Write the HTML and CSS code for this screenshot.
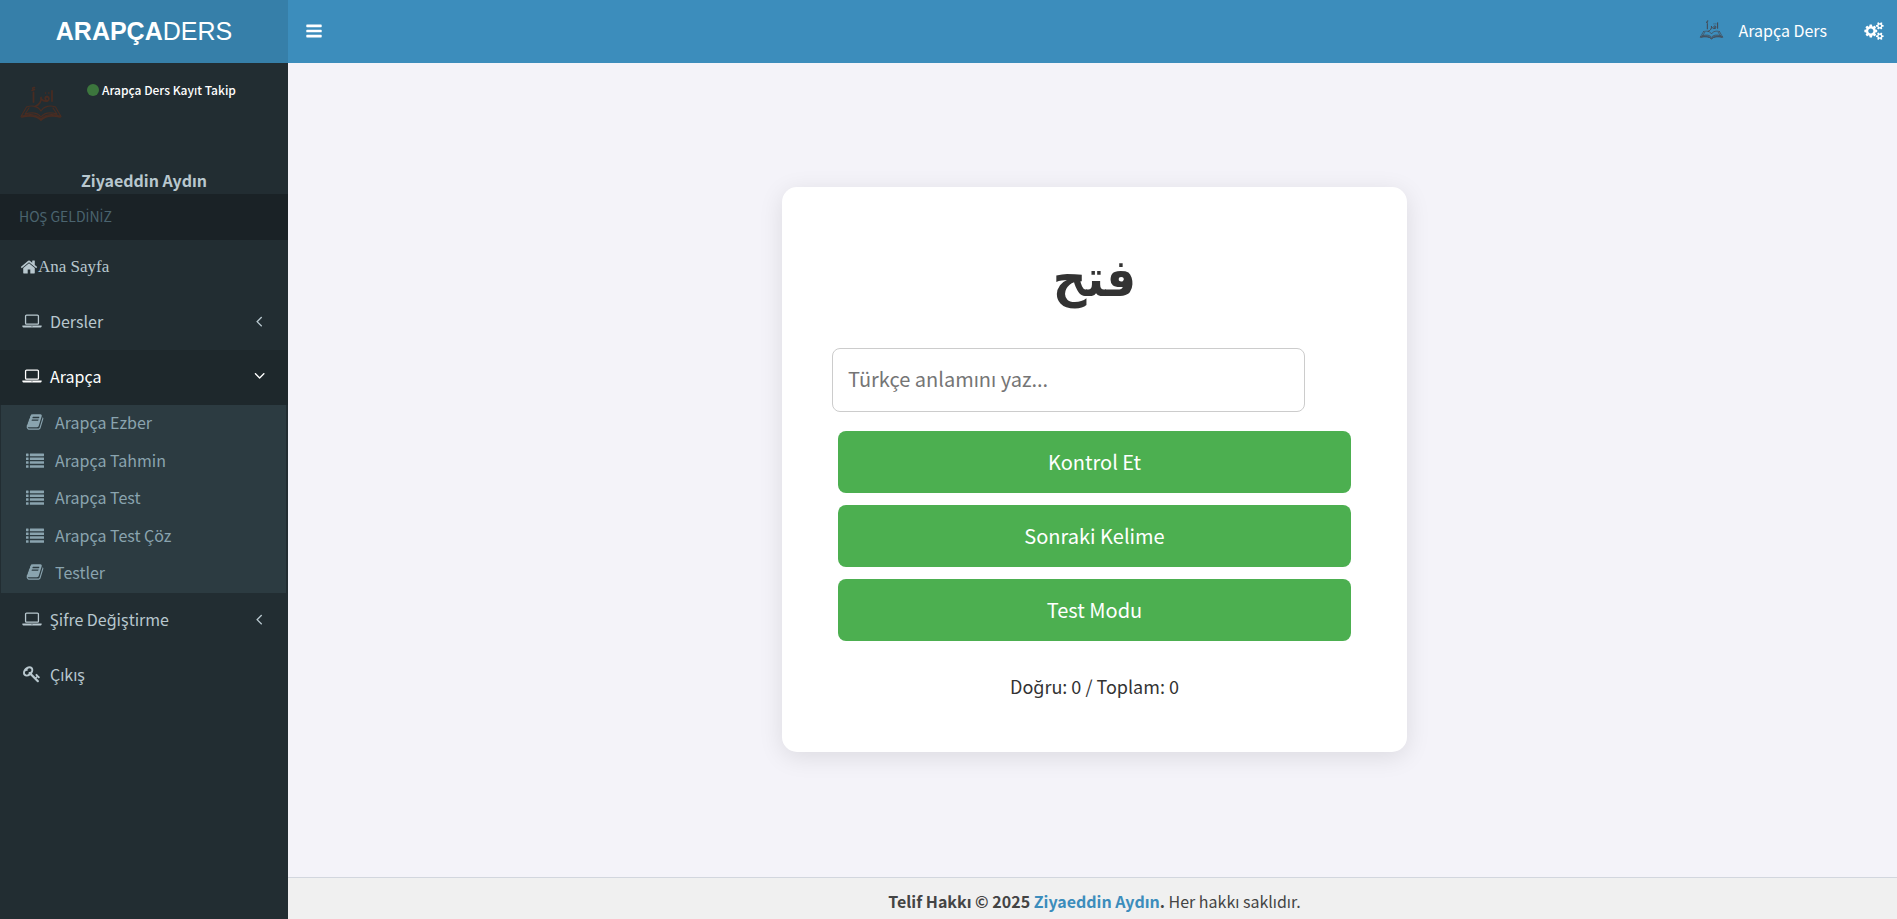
FILE: index.html
```html
<!DOCTYPE html>
<html lang="tr">
<head>
<meta charset="utf-8">
<title>Arapça Ders</title>
<link rel="stylesheet" href="styles.css">
</head>
<body>
<svg class="sprite" aria-hidden="true">
  <symbol id="i-bars" viewBox="0 0 1792 1792"><path d="M128 320q0-64 64-64h1408q64 0 64 64v128q0 64-64 64h-1408q-64 0-64-64zM128 832q0-64 64-64h1408q64 0 64 64v128q0 64-64 64h-1408q-64 0-64-64zM128 1344q0-64 64-64h1408q64 0 64 64v128q0 64-64 64h-1408q-64 0-64-64z"/></symbol>
  <symbol id="i-home" viewBox="0 0 1792 1792"><path d="M1472 992v480q0 26-19 45t-45 19h-384v-384h-256v384h-384q-26 0-45-19t-19-45v-480q0-1 .5-3t.5-3l575-474 575 474q1 2 1 6zm223-69l-62 74q-8 9-21 11h-3q-13 0-21-7l-692-577-692 577q-12 8-24 7-13-2-21-11l-62-74q-8-10-7-23.500t11-21.500l719-599q32-26 76-26t76 26l244 204v-195q0-14 9-23t23-9h192q14 0 23 9t9 23v408l219 182q10 8 11 21.500t-7 23.500z"/></symbol>
  <symbol id="i-laptop" viewBox="0 0 1920 1792"><path d="M416 1280q-66 0-113-47t-47-113v-704q0-66 47-113t113-47h1088q66 0 113 47t47 113v704q0 66-47 113t-113 47h-1088zm-32-864v704q0 13 9.500 22.500t22.500 9.500h1088q13 0 22.500-9.500t9.500-22.500v-704q0-13-9.500-22.500t-22.500-9.500h-1088q-13 0-22.500 9.500t-9.500 22.500zm1376 928h160v96q0 40-47 68t-113 28h-1600q-66 0-113-28t-47-68v-96h1760zm-720 96q16 0 16-16t-16-16h-160q-16 0-16 16t16 16h160z"/></symbol>
  <symbol id="i-book" viewBox="0 0 1792 1792"><path d="M1703 478q40 57 18 129l-275 906q-19 64-76.500 107.500t-122.500 43.500h-923q-77 0-148.500-53.500t-99.500-131.500q-24-67-2-127 0-4 3-27t4-37q1-8-3-21.500t-3-19.500q2-11 8-21t16.500-23.500 16.500-23.500q23-38 45-91.500t30-91.500q3-10 .5-30t-.5-28q3-11 17-28t17-23q21-36 42-92t25-90q1-9-2.500-32t.5-28q4-13 22-30.500t22-22.500q19-26 42.500-84.500t27.500-96.500q1-8-3-25.500t-2-26.500q2-8 9-18t18-23 17-21q8-12 16.500-30.500t15-35 16-36 19.500-32 26.500-23.500 36-11.500 47.500 5.500l-1 3q38-9 51-9h761q74 0 114 56t18 130l-274 906q-36 119-71.500 153.500t-128.500 34.500h-869q-27 0-38 15-11 16-1 43 24 70 144 70h923q29 0 56-15.500t35-41.500l300-987q7-22 5-57 38 15 59 43zm-1064 2q-4 13 2 22.500t20 9.500h608q13 0 25.500-9.500t16.500-22.500l21-64q4-13-2-22.500t-20-9.500h-608q-13 0-25.500 9.500t-16.500 22.500zm-83 256q-4 13 2 22.500t20 9.500h608q13 0 25.500-9.500t16.500-22.500l21-64q4-13-2-22.500t-20-9.500h-608q-13 0-25.500 9.500t-16.500 22.500z"/></symbol>
  <symbol id="i-list" viewBox="0 0 1792 1792"><path d="M0 288q0-32 32-32h192q32 0 32 32v192q0 32-32 32h-192q-32 0-32-32zM0 672q0-32 32-32h192q32 0 32 32v192q0 32-32 32h-192q-32 0-32-32zM0 1056q0-32 32-32h192q32 0 32 32v192q0 32-32 32h-192q-32 0-32-32zM0 1440q0-32 32-32h192q32 0 32 32v192q0 32-32 32h-192q-32 0-32-32zM384 288q0-32 32-32h1344q32 0 32 32v192q0 32-32 32h-1344q-32 0-32-32zM384 672q0-32 32-32h1344q32 0 32 32v192q0 32-32 32h-1344q-32 0-32-32zM384 1056q0-32 32-32h1344q32 0 32 32v192q0 32-32 32h-1344q-32 0-32-32zM384 1440q0-32 32-32h1344q32 0 32 32v192q0 32-32 32h-1344q-32 0-32-32z"/></symbol>
  <symbol id="i-angle" viewBox="0 0 1792 1792"><path d="M1203 544q0 13-10 23l-393 393 393 393q10 10 10 23t-10 23l-50 50q-10 10-23 10t-23-10l-466-466q-10-10-10-23t10-23l466-466q10-10 23-10t23 10l50 50q10 10 10 23z"/></symbol>
  <symbol id="i-key" viewBox="0 0 1792 1792"><path d="M832 512q0-80-56-136t-136-56-136 56-56 136q0 42 19 83-41-19-83-19-80 0-136 56t-56 136 56 136 136 56 136-56 56-136q0-42-19-83 41 19 83 19 80 0 136-56t56-136zm851 704q0 17-49 66t-66 49q-9 0-28.500-16t-36.500-33-38.500-40-24.500-26l-96 96 220 220q28 28 28 68 0 42-39 81t-81 39q-40 0-68-28l-671-671q-176 131-365 131-163 0-265.500-102.500t-102.500-265.500q0-160 95-313t248-248 313-95q163 0 265.500 102.500t102.500 265.500q0 189-131 365l355 355 96-96q-3-3-26-24.500t-40-38.500-33-36.500-16-28.500q0-17 49-66t66-49q13 0 23 10 6 6 46 44.500t82 79.500 86.500 86 73 78 28.500 41z"/></symbol>
  <symbol id="i-cogs" viewBox="0 0 1920 1792"><path d="M896 896q0-106-75-181t-181-75-181 75-75 181 75 181 181 75 181-75 75-181zm768 512q0-52-38-90t-90-38-90 38-38 90q0 53 37.500 90.500t90.500 37.500 90.500-37.500 37.500-90.500zm0-1024q0-52-38-90t-90-38-90 38-38 90q0 53 37.500 90.500t90.500 37.500 90.500-37.500 37.500-90.500zm-384 421v185q0 10-7 19.500t-16 10.500l-155 24q-11 35-32 76 34 48 90 115 7 11 7 20 0 12-7 19-23 30-82.500 89.500t-78.500 59.500q-11 0-21-7l-115-90q-37 19-77 31-11 108-23 155-7 24-30 24h-186q-11 0-20-7.500t-10-17.500l-23-153q-34-10-75-31l-118 89q-7 7-20 7-11 0-21-8-144-133-144-160 0-9 7-19 10-14 41-53t47-61q-23-44-35-82l-152-24q-10-1-17-9.500t-7-19.500v-185q0-10 7-19.500t16-10.500l155-24q11-35 32-76-34-48-90-115-7-11-7-20 0-12 7-20 22-30 82-89t79-59q11 0 21 7l115 90q34-18 77-32 11-108 23-154 7-24 30-24h186q11 0 20 7.500t10 17.500l23 153q34 10 75 31l118-89q8-7 20-7 11 0 21 8 144 133 144 160 0 8-7 19-12 16-42 54t-45 60q23 48 34 82l152 23q10 2 17 10.500t7 19.500zm640 533v140q0 16-149 31-12 27-30 52 51 113 51 138 0 4-4 7-122 71-124 71-8 0-46-47t-52-68q-20 2-30 2t-30-2q-14 21-52 68t-46 47q-2 0-124-71-4-3-4-7 0-25 51-138-18-25-30-52-149-15-149-31v-140q0-16 149-31 13-29 30-52-51-113-51-138 0-4 4-7 4-2 35-20t59-34 30-16q8 0 46 46.500t52 67.500q20-2 30-2t30 2q51-71 92-112l6-2q4 0 124 70 4 3 4 7 0 25-51 138 17 23 30 52 149 15 149 31zm0-1024v140q0 16-149 31-12 27-30 52 51 113 51 138 0 4-4 7-122 71-124 71-8 0-46-47t-52-68q-20 2-30 2t-30-2q-14 21-52 68t-46 47q-2 0-124-71-4-3-4-7 0-25 51-138-18-25-30-52-149-15-149-31v-140q0-16 149-31 13-29 30-52-51-113-51-138 0-4 4-7 4-2 35-20t59-34 30-16q8 0 46 46.500t52 67.500q20-2 30-2t30 2q51-71 92-112l6-2q4 0 124 70 4 3 4 7 0 25-51 138 17 23 30 52 149 15 149 31z"/></symbol>
  <symbol id="i-logo" viewBox="0 0 44 36">
    <g fill="none" stroke="currentColor" stroke-linecap="round" stroke-linejoin="round">
      <path stroke-width="1.200" d="M7.500 21C13 19 19 20 22 25 25 20 31 19 36.500 21M7.500 21L2 30.500M36.500 21L42 30.500M2 30.500C10 27.500 18 28 22 33 26 28 34 27.500 42 30.500M10 22L6 28M34 22L38 28M6 28C13 26 19 27 22 31 25 27 31 26 38 28"/>
      <path stroke-width="1.800" d="M3 31C11 29 18 30 22 34 26 30 33 29 41 31"/>
      <path stroke-width="1.800" d="M33 5V15M28.500 15C25.500 14 25.500 11 28 10.500 30.500 11 30.500 14 28.500 15C26 15.500 24 15 23 13.500M22 11.500C23 15 20 19 16 20.500M14.500 6.500V16"/>
      <path stroke-width="1.600" d="M26.500 7H26.600M29.800 7H29.900M15.500 1.500C13 1 13 4 15.500 3.500L13 4.500"/>
    </g>
  </symbol>
</svg>

<header class="topbar">
  <a class="brand" href="#"><b>ARAPÇA</b>DERS</a>
  <nav class="topnav">
    <button class="toggle" type="button" aria-label="Menü"><svg class="icon"><use href="#i-bars"/></svg></button>
    <div class="topnav-right">
      <a class="account" href="#"><svg class="account-logo"><use href="#i-logo"/></svg>Arapça Ders</a>
      <a class="settings" href="#" aria-label="Ayarlar"><svg class="icon icon-wide"><use href="#i-cogs"/></svg></a>
    </div>
  </nav>
</header>

<div class="shell">
  <aside class="sidebar">
    <div class="user-panel">
      <div class="user-row">
        <svg class="user-logo"><use href="#i-logo"/></svg>
        <a class="status" href="#"><span class="dot"></span>Arapça Ders Kayıt Takip</a>
      </div>
      <strong class="user-name">Ziyaeddin Aydın</strong>
    </div>
    <div class="menu-title">HOŞ GELD<span class="dotted">İ</span>N<span class="dotted">İ</span>Z</div>
    <ul class="menu">
      <li><a class="item item-home" href="#"><svg class="icon"><use href="#i-home"/></svg>Ana Sayfa</a></li>
      <li><a class="item" href="#"><svg class="icon icon-wide"><use href="#i-laptop"/></svg><span class="label">Dersler</span><svg class="icon caret"><use href="#i-angle"/></svg></a></li>
      <li>
        <a class="item active" href="#"><svg class="icon icon-wide"><use href="#i-laptop"/></svg><span class="label">Arapça</span><svg class="icon caret caret-open"><use href="#i-angle"/></svg></a>
        <ul class="submenu">
          <li><a class="subitem" href="#"><svg class="icon"><use href="#i-book"/></svg>Arapça Ezber</a></li>
          <li><a class="subitem" href="#"><svg class="icon"><use href="#i-list"/></svg>Arapça Tahmin</a></li>
          <li><a class="subitem" href="#"><svg class="icon"><use href="#i-list"/></svg>Arapça Test</a></li>
          <li><a class="subitem" href="#"><svg class="icon"><use href="#i-list"/></svg>Arapça Test Çöz</a></li>
          <li><a class="subitem" href="#"><svg class="icon"><use href="#i-book"/></svg>Testler</a></li>
        </ul>
      </li>
      <li><a class="item" href="#"><svg class="icon icon-wide"><use href="#i-laptop"/></svg><span class="label">Şifre Değiştirme</span><svg class="icon caret"><use href="#i-angle"/></svg></a></li>
      <li><a class="item" href="#"><svg class="icon icon-wide"><use href="#i-key"/></svg><span class="label">Çıkış</span></a></li>
    </ul>
  </aside>

  <div class="page">
    <main class="content">
      <section class="card">
        <div class="word" lang="ar" dir="rtl">فتح</div>
        <input class="answer" type="text" placeholder="Türkçe anlamını yaz..." aria-label="Türkçe anlamını yaz">
        <div class="actions">
          <button class="btn" type="button">Kontrol Et</button>
          <button class="btn" type="button">Sonraki Kelime</button>
          <button class="btn" type="button">Test Modu</button>
        </div>
        <p class="score">Doğru: 0 / Toplam: 0</p>
      </section>
    </main>
    <footer class="footer"><strong>Telif Hakkı © 2025 <a href="#">Ziyaeddin Aydın</a>.</strong> Her hakkı saklıdır.</footer>
  </div>
</div>
</body>
</html>
```
FILE: styles.css
```css
* { box-sizing: border-box; }

body {
  margin: 0;
  min-height: 100vh;
  display: flex;
  flex-direction: column;
  background: #f4f3f9;
  color: #333;
  font-family: "Noto Sans CJK SC", "Noto Sans", sans-serif;
  font-size: 16px;
  line-height: 24px;
}

a { color: inherit; text-decoration: none; }
ul { list-style: none; margin: 0; padding: 0; }
button, input { font: inherit; }

.sprite { position: absolute; width: 0; height: 0; }

.icon {
  width: 18px;
  height: 18px;
  flex: none;
  fill: currentColor;
}
.icon-wide { width: 20px; }

/* Top bar */
.topbar { display: flex; height: 63px; color: #fff; }
.brand {
  flex: none;
  width: 288px;
  background: #367fa9;
  font-family: "Liberation Sans", Arial, sans-serif;
  font-size: 25px;
  line-height: 62px;
  text-align: center;
}
.topnav {
  flex: 1;
  display: flex;
  justify-content: space-between;
  background: #3c8dbc;
}
.toggle {
  display: flex;
  align-items: center;
  padding: 0 17px 2px;
  border: 0;
  background: none;
  color: inherit;
}
.topnav-right { display: flex; }
.account { display: flex; align-items: center; padding: 0 18px 3px; }
.account-logo { width: 25px; height: 20px; margin-right: 14px; color: #45454d; }
.settings { display: flex; align-items: center; padding: 0 13px 2px 19px; }

/* Sidebar */
.shell { flex: 1; display: flex; }
.sidebar { flex: none; width: 288px; background: #222d32; color: #b8c7ce; }
.user-panel {
  display: flex;
  flex-direction: column;
  justify-content: space-between;
  height: 131px;
  padding-bottom: 2px;
}
.user-row { display: flex; align-items: flex-start; padding: 15px 19px; }
.user-logo { width: 44px; height: 36px; margin-top: 8px; color: #482c22; }
.status {
  display: flex;
  align-items: center;
  margin-left: 24px;
  color: #fff;
  font-size: 12px;
  font-weight: 500;
}
.dot {
  width: 12px;
  height: 12px;
  margin-right: 3px;
  border-radius: 50%;
  background: #3c763d;
}
.user-name { text-align: center; }
.menu-title {
  height: 46px;
  padding: 10px 19px;
  background: #1a2226;
  color: #4b646f;
  font-size: 14px;
}
.dotted { font-family: "Open Sans", sans-serif; }
.item {
  display: flex;
  align-items: center;
  height: 55px;
  padding: 0 20px 4px 22px;
}
.item .label { flex: 1; margin-left: 8px; }
.item-home {
  padding: 0 20px 2px;
  font-family: "Liberation Serif", serif;
  font-size: 17px;
}
.item.active { background: #1e282c; color: #fff; }
.caret-open { transform: rotate(-90deg); }
.submenu { margin: 0 2px 0 1px; background: #2c3b41; color: #8aa4af; }
.subitem {
  display: flex;
  align-items: center;
  gap: 11px;
  padding: 5px 25px 9px;
}
.submenu li:nth-child(even) { margin-bottom: -1px; }

/* Content */
.page { flex: 1; display: flex; flex-direction: column; }
.content {
  flex: 1;
  display: flex;
  align-items: center;
  justify-content: center;
  padding: 0 0 2px 4px;
}
.card {
  width: 100%;
  max-width: 625px;
  padding: 50px 50px 52px;
  border-radius: 15px;
  background: #fff;
  box-shadow: 0 5px 25px rgba(0, 0, 0, .1);
}
.word {
  height: 92px;
  margin-bottom: 19px;
  font-family: "Liberation Serif", "DejaVu Sans Condensed", "DejaVu Sans", serif;
  font-size: 52px;
  font-weight: 700;
  line-height: 84px;
  text-align: center;
}
.answer {
  display: block;
  width: 90%;
  height: 64px;
  padding: 0 15px 2px;
  border: 1px solid #ccc;
  border-radius: 8px;
  background: #fff;
  font-size: 20px;
}
.answer::placeholder { color: #757575; }
.actions { display: flex; flex-direction: column; gap: 12px; padding: 19px 6px 0; }
.btn {
  height: 62px;
  border: 0;
  border-radius: 8px;
  background: #4caf50;
  color: #fff;
  font-size: 20px;
}
.score { margin: 31px 0 0; font-size: 18px; line-height: 28px; text-align: center; }
.footer {
  height: 42px;
  padding: 11px 0 0 4px;
  border-top: 1px solid #d2d6de;
  background: #f0f0f0;
  color: #444;
  text-align: center;
}
.footer a { color: #3c8dbc; }
```
